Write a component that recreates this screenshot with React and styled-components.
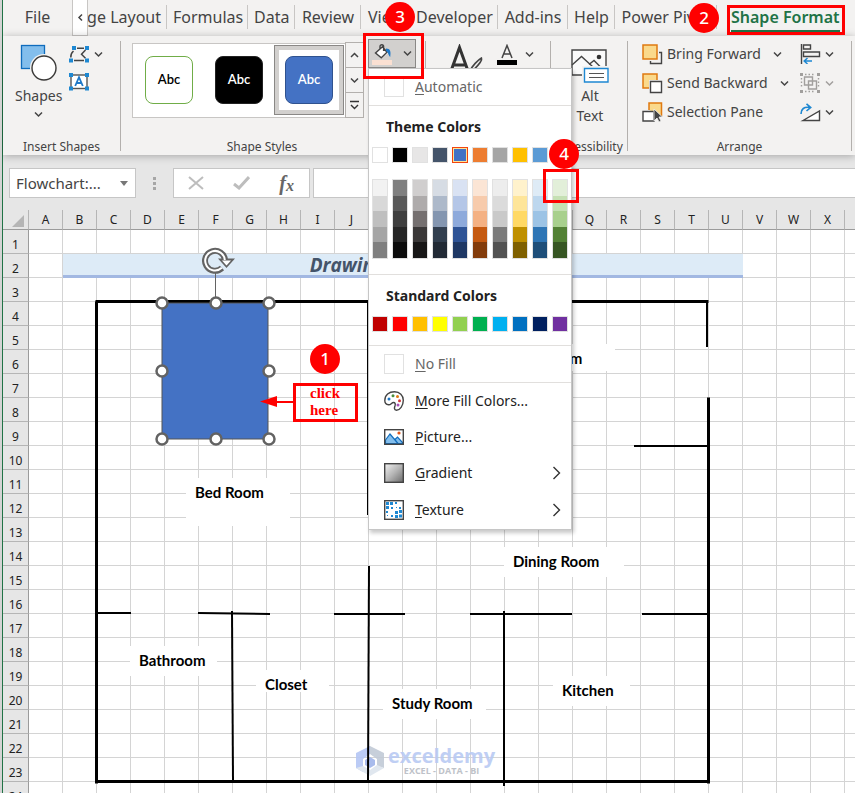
import React from "react";
import styled, { createGlobalStyle, css } from "styled-components";

const Global = createGlobalStyle`
  *, *::before, *::after { box-sizing: border-box; }
  html, body { margin: 0; padding: 0; }
  body { overflow: hidden; background: #ffffff; }
  button, input { font: inherit; color: inherit; margin: 0; padding: 0; border: 0; background: none; }
  a { color: inherit; text-decoration: none; }
  svg { display: block; flex: none; }
`;

const RED = "#ff0000";

const Window = styled.div`
  height: 100vh;
  display: flex;
  flex-direction: column;
  overflow: hidden;
  border-left: 2px solid #d4d4d4;
  box-shadow: inset 1px 0 0 #217346;
  padding-left: 1px;
  background: #e6e6e6;
  font-family: "Noto Sans", "Open Sans", sans-serif;
  color: #444444;
`;

/* ---------- callouts ---------- */
const Badge = styled.span`
  position: absolute;
  z-index: 30;
  left: ${(p) => p.$x}px;
  top: ${(p) => p.$y}px;
  width: 30px;
  height: 30px;
  border-radius: 50%;
  background: ${RED};
  color: #ffffff;
  text-align: center;
  font: 500 17px/30px "Noto Sans", sans-serif;
`;

const Frame = styled.span`
  position: absolute;
  z-index: 25;
  left: ${(p) => p.$x}px;
  top: ${(p) => p.$y}px;
  width: ${(p) => p.$w}px;
  height: ${(p) => p.$h}px;
  border: 3px solid ${RED};
  pointer-events: none;
`;

/* ---------- tabs ---------- */
const TabBar = styled.nav`
  flex: none;
  height: 36px;
  display: flex;
  align-items: flex-start;
  background: #f3f2f1;
  font-size: 16px;
  line-height: 24px;
  white-space: nowrap;
`;

const Tab = styled.a`
  flex: none;
  position: relative;
  margin-top: 5px;
  padding: 0 6px;
  width: ${(p) => p.$w}px;
  text-align: center;
  &::after {
    content: "";
    position: absolute;
    right: 0;
    top: 0;
    height: 24px;
    border-right: 1px solid ${(p) => (p.$plain ? "transparent" : "#c8c6c4")};
  }
`;

const ClippedTab = styled(Tab)`
  overflow: hidden;
  display: flex;
  justify-content: flex-end;
  padding: 0 6px 0 0;
`;

const ActiveTab = styled.a`
  position: relative;
  margin: 5px 0 0 14px;
  height: 27px;
  border-bottom: 2px solid #217346;
  color: #217346;
  font-weight: 600;
`;

const TabScroll = styled.button`
  flex: none;
  width: 16px;
  height: 36px;
  border: 1px solid #c8c6c4;
  border-top: 0;
  background: #ffffff;
  display: flex;
  align-items: center;
  justify-content: center;
`;

/* ---------- ribbon ---------- */
const Ribbon = styled.div`
  flex: none;
  position: relative;
  z-index: 5;
  height: 119px;
  padding-top: 5px;
  display: flex;
  background: #f3f2f1;
  box-shadow: 0 1px 8px rgba(0, 0, 0, 0.28);
`;

const Group = styled.section`
  flex: none;
  position: relative;
  width: ${(p) => p.$w}px;
  height: 110px;
  display: flex;
  flex-direction: column;
  border-right: 1px solid #b3b0ad;
`;

const GroupBody = styled.div`
  flex: none;
  height: 98px;
  display: flex;
  align-items: flex-start;
  padding: ${(p) => p.$pad || "0"};
  gap: ${(p) => p.$gap || 0}px;
`;

const GroupLabel = styled.h2`
  margin: 0;
  padding-right: ${(p) => p.$shift || 0}px;
  font-size: 12px;
  line-height: 16px;
  font-weight: 400;
  text-align: center;
  white-space: nowrap;
`;

const BigButton = styled.button`
  display: flex;
  flex-direction: column;
  align-items: center;
  font-size: 14px;
  line-height: 20px;
  gap: ${(p) => p.$gap || 0}px;
`;

const Stack = styled.div`
  display: flex;
  flex-direction: column;
  gap: ${(p) => p.$gap || 0}px;
`;

const IconButton = styled.button`
  display: flex;
  align-items: center;
  gap: ${(p) => p.$gap || 5}px;
  height: 20px;
`;

const Gallery = styled.div`
  display: flex;
  height: 75px;
  border: 1px solid #c8c6c4;
  padding-left: 1px;
  background: #ffffff;
`;

const StyleCell = styled.button`
  width: 70px;
  height: 70px;
  margin-top: 1px;
  display: flex;
  align-items: center;
  justify-content: center;
  ${(p) =>
    p.$selected &&
    css`
      border: 1px solid #8a8886;
      box-shadow: inset 0 0 0 4px #d2d0ce;
    `}
`;

const StyleChip = styled.span`
  width: 48px;
  height: 48px;
  border-radius: 8px;
  border: ${(p) => p.$border};
  background: ${(p) => p.$fill};
  color: ${(p) => p.$ink};
  font: 600 13px/44px Lato, sans-serif;
  text-align: center;
`;

const Spinner = styled.div`
  width: 19px;
  margin: -1px -1px -1px 1px;
  display: grid;
  grid-template-rows: repeat(3, 1fr);
  background: #f3f2f1;
`;

const SpinButton = styled.button`
  border: 1px solid #b3b0ad;
  margin-top: -1px;
  display: flex;
  align-items: center;
  justify-content: center;
`;

const FillHost = styled.div`
  position: relative;
  margin-top: -4px;
`;

const FillButton = styled.button`
  width: 48px;
  height: 29px;
  display: flex;
  align-items: center;
  justify-content: center;
  gap: 10px;
  background: #d2d0ce;
  border: 1px solid #8a8886;
`;

const ArrangeGrid = styled.div`
  flex: none;
  height: 98px;
  display: grid;
  grid-template-columns: 150px auto;
  grid-auto-rows: 29px;
  column-gap: 8px;
  padding-left: 14px;
  font-size: 14px;
  line-height: 20px;
`;

const ArrangeButton = styled.button`
  display: flex;
  align-items: center;
  gap: ${(p) => p.$gap || 4}px;
  height: 26px;
  white-space: nowrap;
`;

const ArrangeLabel = styled.span`
  margin-right: 8px;
`;

/* ---------- fill menu ---------- */
const Menu = styled.div`
  position: absolute;
  z-index: 20;
  left: 0;
  top: 29px;
  width: 204px;
  border: 1px solid #c6c6c6;
  background: #ffffff;
  box-shadow: 2px 3px 4px rgba(0, 0, 0, 0.22);
  display: flex;
  flex-direction: column;
  font-size: 14px;
  line-height: 20px;
  color: #222222;
`;

const MenuRow = styled.button`
  display: flex;
  align-items: center;
  gap: 11px;
  height: ${(p) => p.$h}px;
  padding: 0 10px 0 15px;
  color: ${(p) => (p.$muted ? "#666666" : "#222222")};
  border-bottom: ${(p) => (p.$rule ? "1px solid #e1dfdd" : "0")};
  text-align: left;
  white-space: nowrap;
`;

const MenuText = styled.span`
  flex: 1;
  &::first-letter { text-decoration: underline; text-underline-offset: 2px; }
`;

const EmptySwatch = styled.span`
  width: 20px;
  height: 20px;
  border: 1px solid #e1e1e1;
`;

const MenuSection = styled.div`
  padding: ${(p) => p.$pad};
  border-bottom: 1px solid #e1dfdd;
`;

const MenuTitle = styled.h3`
  margin: 0 0 10px 14px;
  font-size: 14px;
  line-height: 20px;
  font-weight: 700;
`;

const SwatchRow = styled.div`
  display: grid;
  grid-template-columns: repeat(10, 16px);
  column-gap: 4px;
`;

const Swatch = styled.button`
  width: 16px;
  height: 16px;
  background: ${(p) => p.$c};
  border: 1px solid #e1e1e1;
  ${(p) =>
    p.$selected &&
    css`
      border-color: #f2440f;
      box-shadow: inset 0 0 0 1px #ffe294;
    `}
`;

const TintRow = styled(SwatchRow)`
  margin-top: 16px;
`;

const TintColumn = styled.div`
  height: 80px;
  border: 1px solid #e1e1e1;
  display: grid;
  grid-template-rows: repeat(5, 1fr);
`;

const Tint = styled.button`
  background: ${(p) => p.$c};
`;

/* ---------- formula bar ---------- */
const FormulaBar = styled.div`
  flex: none;
  display: flex;
  align-items: stretch;
  height: 30px;
  margin: 13px 0 12px;
  padding-left: 6px;
`;

const Field = styled.div`
  display: flex;
  align-items: center;
  background: #ffffff;
  border: 1px solid #c6c6c6;
`;

const NameBox = styled(Field)`
  width: 127px;
  padding: 0 7px 0 6px;
`;

const NameInput = styled.input`
  flex: 1;
  min-width: 0;
  font-size: 15px;
  outline: 0;
`;

const Dots = styled.div`
  width: 37px;
  display: flex;
  align-items: center;
  justify-content: center;
`;

const FxBox = styled(Field)`
  width: 137px;
  margin-right: 3px;
  padding: 0 15px 0 14px;
  justify-content: space-between;
`;

const FxButton = styled.button`
  font: italic 700 20px/24px "Liberation Serif", serif;
  color: #666666;
  sub { font-size: 16px; line-height: 0; vertical-align: -1px; }
`;

const FormulaInput = styled.input`
  flex: 1;
  min-width: 0;
  background: #ffffff;
  border: 1px solid #c6c6c6;
  border-right: 0;
  padding: 0 8px;
`;

/* ---------- sheet ---------- */
const Sheet = styled.main`
  flex: 1;
  min-height: 0;
  position: relative;
  overflow: hidden;
  background: #ffffff;
`;

const Grid = styled.table`
  border-collapse: separate;
  border-spacing: 0;
  table-layout: fixed;
  width: 876px;
`;

const ColHead = styled.th`
  height: 20px;
  padding: 0;
  background: #e6e6e6;
  border-right: 1px solid #b5b5b5;
  border-bottom: 1px solid #9b9b9b;
  font-size: 12px;
  line-height: 16px;
  font-weight: 400;
  color: #222222;
`;

const Corner = styled(ColHead)`
  svg { margin: 2px 4px 0 auto; }
`;

const RowHead = styled.th`
  height: 24px;
  padding: 6px 0 0;
  background: #e6e6e6;
  border-right: 1px solid #9b9b9b;
  border-bottom: 1px solid #b5b5b5;
  font-size: 12px;
  line-height: 16px;
  font-weight: 400;
  color: #222222;
`;

const Cell = styled.td`
  padding: 0;
  border-right: 1px solid #d4d4d4;
  border-bottom: 1px solid #d4d4d4;
`;

const TitleCell = styled.td`
  padding: 0;
  background: #ddebf7;
  border-bottom: 3px solid #a2b8e2;
  color: #44546a;
  text-align: center;
  font: italic 700 19px/20px "Open Sans", "Noto Sans", sans-serif;
`;

/* Floating objects are placed in cell-area coordinates. */
const Canvas = styled.div`
  position: absolute;
  left: 26px;
  top: 20px;
`;

const Walls = styled.svg`
  position: absolute;
  left: 0;
  top: 0;
  overflow: visible;
`;

const RoomLabel = styled.span`
  position: absolute;
  left: ${(p) => p.$x}px;
  top: ${(p) => p.$y}px;
  width: ${(p) => p.$w}px;
  height: ${(p) => p.$h}px;
  padding: 4px 0 0 9px;
  background: #ffffff;
  color: #000000;
  font: 700 15px/20px Lato, sans-serif;
  white-space: nowrap;
`;

const ClickNote = styled.span`
  position: absolute;
  left: 264px;
  top: 153px;
  width: 65px;
  height: 39px;
  border: 3px solid ${RED};
  color: ${RED};
  font: 700 15px/17px "Liberation Serif", serif;
  display: flex;
  align-items: flex-end;
  padding: 0 12px 0 14px;
`;

const Brand = styled.div`
  position: absolute;
  left: 327px;
  top: 516px;
  display: flex;
  align-items: center;
  gap: 4px;
  opacity: 0.9;
`;

const BrandText = styled.div`
  display: flex;
  flex-direction: column;
  align-items: center;
  color: #b9caf3;
  font: 700 20px/20px "Open Sans", sans-serif;
  small { font-size: 9px; line-height: 10px; color: #b8bcc4; }
`;

/* ---------- icons ---------- */
const Chevron = ({ dir = "down", c = "#444", s = 8 }) => {
  const d = { down: "M1 2.5 4.5 6 8 2.5", up: "M1 6 4.5 2.5 8 6", left: "M6 1.5 3 4.5 6 7.5" }[dir];
  return (
    <svg width={s + 1} height={s + 1} viewBox="0 0 9 9" fill="none" stroke={c} strokeWidth="1.5">
      <path d={d} />
    </svg>
  );
};

const MoreStyles = () => (
  <svg width="9" height="10" viewBox="0 0 9 10" fill="none" stroke="#333" strokeWidth="1.4">
    <path d="M0 1.5h9M1 5 4.5 8.5 8 5" />
  </svg>
);

const ShapesIcon = () => (
  <svg width="38" height="38" viewBox="0 0 38 38">
    <rect x="1.5" y="1.5" width="23" height="23" fill="#83beec" stroke="#0f6cbd" strokeWidth="1.3" />
    <circle cx="24" cy="24" r="14" fill="#f3f2f1" />
    <circle cx="24" cy="24" r="12" fill="#fff" stroke="#3b3a39" strokeWidth="1.4" />
  </svg>
);

const EditPoints = () => (
  <svg width="20" height="17" viewBox="0 0 20 17" fill="none">
    <path d="M8 2.300h7M16.500 4 12.500 8.300l4 4M5 14.500h10M1.800 11.500C1.500 8.500 2.800 6.500 4.500 5" stroke="#444" strokeWidth="1.5" />
    <path d="M3 0h4v4H3zM16 0h4v4h-4zM0 12.500h4v4H0zM16 12.500h4v4h-4z" fill="#1e88d2" />
  </svg>
);

const TextBoxIcon = () => (
  <svg width="20" height="18" viewBox="0 0 20 18">
    <rect x="2" y="2" width="16" height="13.500" fill="#fff" stroke="#555" strokeWidth="1.4" />
    <path d="M6.200 13 10 4.200 13.800 13M7.600 10h4.800" stroke="#1e78c8" strokeWidth="1.8" fill="none" />
    <path d="M0 0h4v4H0zM16 0h4v4h-4zM0 13.500h4v4H0zM16 13.500h4v4h-4z" fill="#1e88d2" />
  </svg>
);

const BucketIcon = () => (
  <svg width="21" height="22" viewBox="0 0 21 22" fill="none">
    <path d="M4 9.500 10.500 4 16 10 9.500 15.500Z" fill="#fff" />
    <path d="M8 5.500V3.500a1.800 1.800 0 0 1 3.600 0V8M10.500 3.800 3.500 10l5.800 4.800L15 9.300Z" stroke="#444" strokeWidth="1.4" />
    <path d="M14 5.500c4.500 0 5 3 4.200 8.500-2-1.800-1.600-4.500-4.200-6Z" fill="#1e78c8" />
    <path d="M0 17h20v5H0z" fill="#fbe0d2" />
  </svg>
);

const TextEffectsIcon = () => (
  <svg width="36" height="30" viewBox="0 0 36 30" fill="none" stroke="#444" strokeWidth="1.6">
    <path d="M2 27 10.500 3.500 19 27M4.500 21h12" stroke="#333" strokeWidth="3" />
    <path d="M21 27c2-5 8-11 11.500-13 1.500 3-5 9-9 13" fill="#f3f2f1" />
  </svg>
);

const FontColorIcon = () => (
  <svg width="20" height="21" viewBox="0 0 20 21" fill="none">
    <path d="M5 14 10 1.500 15 14M6.700 10h6.600" stroke="#444" strokeWidth="1.5" />
    <path d="M0 16h20v5H0z" fill="#000" />
  </svg>
);

const AltTextIcon = () => (
  <svg width="38" height="34" viewBox="0 0 38 34" fill="none">
    <path d="M1 1h34v25H1z" fill="#fafafa" stroke="#444" strokeWidth="1.400" />
    <path d="M1 16 10.500 7.500 22 18M18 15.500l5-4 6 6" stroke="#444" strokeWidth="1.400" />
    <circle cx="28" cy="8" r="2.300" fill="#333" />
    <path d="M12.500 18.500h25v15h-25z" fill="#fff" stroke="#f3f2f1" strokeWidth="3" />
    <path d="M13.500 19.500h23.500v13.500H13.500z" fill="#fff" stroke="#1e88d2" strokeWidth="1.400" />
    <path d="M18 24.500h15M18 28.500h15" stroke="#555" strokeWidth="1.200" />
  </svg>
);

const ForwardIcon = () => (
  <svg width="21" height="21" viewBox="0 0 21 21" fill="none">
    <path d="M17 8.500h2.500v11H8.500V17" stroke="#444" strokeWidth="1.400" />
    <path d="M1 1h14v14H1z" fill="#fad98b" stroke="#e07a10" strokeWidth="1.500" />
  </svg>
);

const BackwardIcon = () => (
  <svg width="21" height="21" viewBox="0 0 21 21" fill="none">
    <path d="M1 1h14v14H1z" fill="#fad98b" stroke="#e07a10" strokeWidth="1.500" />
    <path d="M7 7h13v13H7z" fill="#f3f2f1" />
    <path d="M8.500 8.500h11v11h-11z" fill="#fff" stroke="#444" strokeWidth="1.400" />
  </svg>
);

const PaneIcon = () => (
  <svg width="21" height="21" viewBox="0 0 21 21" fill="none">
    <path d="M7 8V1h12.500v13" fill="#fad98b" stroke="#e07a10" strokeWidth="1.500" />
    <path d="M1 9.500h11V19H1z" fill="#fff" stroke="#444" strokeWidth="1.400" />
    <path d="M12 7v12l3-3 2 4 2-1-2-4h3.500z" fill="#444" stroke="#f3f2f1" strokeWidth="0.800" />
  </svg>
);

const AlignIcon = () => (
  <svg width="21" height="20" viewBox="0 0 21 20" fill="none">
    <path d="M1.500 0v20M3.500 1h7v4h-7zM3.500 8h16v4.500h-16z" stroke="#444" strokeWidth="1.400" />
    <path d="M12 17H4.500M7.500 14 4.200 17l3.300 3" stroke="#1e88d2" strokeWidth="1.500" />
  </svg>
);

const GroupIcon = () => (
  <svg width="21" height="20" viewBox="0 0 21 20" fill="none" stroke="#a19f9d" strokeWidth="1.400">
    <path d="M4.500 4h8v8h-8zM8.500 8h8v8h-8z" />
    <path d="M0 0h3v3H0zM17 0h3v3h-3zM0 17h3v3H0zM17 17h3v3h-3z" fill="#a19f9d" stroke="none" />
    <path d="M1.500 5v10M18.500 5v10M5 1.500h10M5 18.500h10" strokeDasharray="1.500 2" />
  </svg>
);

const RotateIcon = () => (
  <svg width="21" height="19" viewBox="0 0 21 19" fill="none">
    <path d="M3 17.500 19.500 8v9.500z" stroke="#444" strokeWidth="1.400" fill="#fff" />
    <path d="M1 11c0-5 3-7.500 9-6.500M6.500.8l4.200 3.600-4.200 3.600" stroke="#1e88d2" strokeWidth="1.600" />
  </svg>
);

const PaletteIcon = () => (
  <svg width="20" height="20" viewBox="0 0 20 20" fill="none">
    <path d="M.8 9.500C.8 4 5 .8 10.500.8 15.800.8 19.300 4.500 19.300 9.300c0 5.500-3.500 9.900-6.800 9.900-2.700 0-2.200-2.500-1.500-4.400.6-1.800.2-3.300-1.400-3.300-2.200 0-2.700 2.600-5 2.300C2 13.500.8 12 .8 9.500Z" stroke="#444" strokeWidth="1.400" fill="#fff" />
    <circle cx="5" cy="8" r="1.500" fill="#1e78c8" />
    <circle cx="9" cy="4.800" r="1.500" fill="#4a8f3c" />
    <circle cx="13.500" cy="5.500" r="1.500" fill="#e07a10" />
    <circle cx="15.500" cy="9.700" r="1.500" fill="#d13438" />
    <circle cx="14" cy="14" r="1.500" fill="#a54fb5" />
  </svg>
);

const PictureIcon = () => (
  <svg width="20" height="16" viewBox="0 0 20 16" fill="none">
    <path d="M1.500 11 6 5l8 9.500H1.500zM11 10.500l2.500-2.500 5 5.500v1H14z" fill="#83beec" stroke="#0f6cbd" strokeWidth="1.200" />
    <rect x="0.700" y="0.700" width="18.600" height="14.600" stroke="#444" strokeWidth="1.400" />
    <circle cx="15" cy="4" r="1.600" fill="#e0561b" />
  </svg>
);

const GradientIcon = () => (
  <svg width="20" height="20" viewBox="0 0 20 20">
    <defs>
      <linearGradient id="steel" x1="0" y1="0" x2="1" y2="1">
        <stop offset="0" stopColor="#f2f2f2" />
        <stop offset="0.500" stopColor="#b5b5b5" />
        <stop offset="1" stopColor="#6a6a6a" />
      </linearGradient>
    </defs>
    <rect x="0.700" y="0.700" width="18.600" height="18.600" fill="url(#steel)" stroke="#444" strokeWidth="1.400" />
  </svg>
);

const TextureIcon = () => (
  <svg width="20" height="20" viewBox="0 0 20 20">
    <rect x="0.700" y="0.700" width="18.600" height="18.600" fill="#fff" stroke="#444" strokeWidth="1.400" />
    <path
      d="M2 2h3v3H2zM6 2h3v3H6zM11 2h2v2h-2zM2 6h3v3H2zM7 7h2v2H7zM2 11h2v2H2zM15 7h2v2h-2zM11 11h3v3h-3zM15 10h3v3h-3zM7 15h2v2H7zM11 15h3v3h-3zM15 14.500h3v3h-3zM12 7h1v1h-1zM3 15h1v1H3z"
      fill="#1e88d2"
    />
  </svg>
);

const SubmenuArrow = () => (
  <svg width="9" height="14" viewBox="0 0 9 14" fill="none" stroke="#333" strokeWidth="1.400">
    <path d="M1.500 1 7.500 7l-6 6" />
  </svg>
);

const RotateHandle = ({ x, y }) => (
  <g transform={`translate(${x} ${y})`} fill="none">
    <path d="M7 7A10 10 0 1 1 10-1" stroke="#636363" strokeWidth="6" />
    <path d="M3-2.500h17L11.500 7z" fill="#636363" />
    <path d="M6.800 6.800A9.800 9.800 0 1 1 9.800-1" stroke="#fff" strokeWidth="2" />
    <path d="M7-.5h9L11.500 4.500z" fill="#fff" />
  </g>
);

/* ---------- data ---------- */
const THEME = ["#ffffff", "#000000", "#e7e6e6", "#44546a", "#4472c4", "#ed7d31", "#a5a5a5", "#ffc000", "#5b9bd5", "#70ad47"];
const TINTS = [
  ["#f2f2f2", "#d8d8d8", "#bfbfbf", "#a5a5a5", "#7f7f7f"],
  ["#7f7f7f", "#595959", "#3f3f3f", "#262626", "#0c0c0c"],
  ["#d0cece", "#aeabab", "#757070", "#3a3838", "#171616"],
  ["#d6dce4", "#adb9ca", "#8496b0", "#323f4f", "#222a35"],
  ["#d9e2f3", "#b4c6e7", "#8eaadb", "#2f5496", "#1f3864"],
  ["#fbe5d5", "#f7cbac", "#f4b183", "#c55a11", "#833c0b"],
  ["#ededed", "#dbdbdb", "#c9c9c9", "#7b7b7b", "#525252"],
  ["#fff2cc", "#fee599", "#ffd965", "#bf9000", "#7f6000"],
  ["#deebf6", "#bdd7ee", "#9cc3e5", "#2e75b5", "#1e4e79"],
  ["#e2efd9", "#c5e0b3", "#a8d08d", "#538135", "#375623"],
];
const STANDARD = ["#c00000", "#ff0000", "#ffc000", "#ffff00", "#92d050", "#00b050", "#00b0f0", "#0070c0", "#002060", "#7030a0"];
const COLUMNS = "ABCDEFGHIJKLMNOPQRSTUVWXY".split("");
const ROWS = Array.from({ length: 24 }, (_, i) => i + 1);

/* x1, y1, x2, y2, thickness */
const WALLS = [
  [67, 71, 67, 553, 3],
  [66, 71, 679, 71, 3],
  [678, 71, 678, 117, 2],
  [679, 167, 679, 553, 3],
  [66, 551, 680, 551, 3],
  [605, 216, 679, 216, 2],
  [68, 383, 102, 383, 2],
  [169, 383, 241, 384, 2],
  [305, 384, 376, 384, 2],
  [441, 384, 543, 384, 2],
  [613, 384, 679, 384, 2],
  [203, 381, 204, 551, 2],
  [339, 71, 339, 285, 2],
  [340, 336, 339, 551, 2],
  [475, 381, 475, 556, 2],
];
const ROOMS = [
  { t: "Living Room", x: 462, y: 114, w: 124, h: 27 },
  { t: "Bed Room", x: 157, y: 248, w: 104, h: 48 },
  { t: "Dining Room", x: 475, y: 317, w: 120, h: 30 },
  { t: "Bathroom", x: 101, y: 416, w: 87, h: 30 },
  { t: "Closet", x: 227, y: 440, w: 73, h: 22 },
  { t: "Study Room", x: 354, y: 459, w: 103, h: 30 },
  { t: "Kitchen", x: 524, y: 446, w: 77, h: 30 },
];
const HANDLES = [
  [133, 73], [187, 73], [240, 73], [133, 141], [240, 141], [133, 209], [187, 209], [240, 209],
];

function FillMenu() {
  return (
    <Menu role="menu" aria-label="Shape Fill">
      <MenuRow $h={37} $muted $rule>
        <EmptySwatch />
        <MenuText>Automatic</MenuText>
      </MenuRow>
      <MenuSection $pad="11px 3px 15px">
        <MenuTitle>Theme Colors</MenuTitle>
        <SwatchRow>
          {THEME.map((c) => (
            <Swatch key={c} $c={c} $selected={c === "#4472c4"} aria-label={c} />
          ))}
        </SwatchRow>
        <TintRow>
          {TINTS.map((col, i) => (
            <TintColumn key={i}>
              {col.map((c) => (
                <Tint key={c} $c={c} aria-label={c} />
              ))}
            </TintColumn>
          ))}
        </TintRow>
      </MenuSection>
      <MenuSection $pad="11px 3px 13px">
        <MenuTitle>Standard Colors</MenuTitle>
        <SwatchRow>
          {STANDARD.map((c) => (
            <Swatch key={c} $c={c} aria-label={c} />
          ))}
        </SwatchRow>
      </MenuSection>
      <MenuRow $h={37} $muted $rule>
        <EmptySwatch />
        <MenuText>No Fill</MenuText>
      </MenuRow>
      <MenuRow $h={36}><PaletteIcon /><MenuText>More Fill Colors...</MenuText></MenuRow>
      <MenuRow $h={36}><PictureIcon /><MenuText>Picture...</MenuText></MenuRow>
      <MenuRow $h={36}><GradientIcon /><MenuText>Gradient</MenuText><SubmenuArrow /></MenuRow>
      <MenuRow $h={38}><TextureIcon /><MenuText>Texture</MenuText><SubmenuArrow /></MenuRow>
      <Badge $x={180} $y={70}>4</Badge>
      <Frame $x={174} $y={100} $w={36} $h={34} />
    </Menu>
  );
}

function RibbonGroups() {
  return (
    <Ribbon>
      <Group $w={118}>
        <GroupBody $pad="3px 0 0 12px" $gap={7}>
          <BigButton $gap={4}>
            <ShapesIcon />
            Shapes
            <Chevron />
          </BigButton>
          <Stack $gap={8}>
            <IconButton aria-label="Edit shape"><EditPoints /><Chevron /></IconButton>
            <IconButton aria-label="Text box"><TextBoxIcon /></IconButton>
          </Stack>
        </GroupBody>
        <GroupLabel>Insert Shapes</GroupLabel>
      </Group>
      <Group $w={305}>
        <GroupBody $pad="2px 0 0 11px" $gap={4}>
          <Gallery>
            <StyleCell><StyleChip $border="1px solid #70ad47" $fill="#fff" $ink="#000">Abc</StyleChip></StyleCell>
            <StyleCell><StyleChip $border="1px solid #222" $fill="#000" $ink="#fff">Abc</StyleChip></StyleCell>
            <StyleCell $selected><StyleChip $border="1px solid #2f528f" $fill="#4472c4" $ink="#fff">Abc</StyleChip></StyleCell>
            <Spinner>
              <SpinButton aria-label="Previous styles"><Chevron dir="up" /></SpinButton>
              <SpinButton aria-label="Next styles"><Chevron /></SpinButton>
              <SpinButton aria-label="More styles"><MoreStyles /></SpinButton>
            </Spinner>
          </Gallery>
          <FillHost>
            <FillButton aria-label="Shape fill"><BucketIcon /><Chevron /></FillButton>
            <FillMenu />
            <Frame $x={-5} $y={-6} $w={61} $h={46} />
            <Badge $x={17} $y={-37}>3</Badge>
          </FillHost>
        </GroupBody>
        <GroupLabel $shift={22}>Shape Styles</GroupLabel>
      </Group>
      <Group $w={125}>
        <GroupBody $pad="3px 0 0 23px" $gap={12}>
          <BigButton aria-label="Text effects"><TextEffectsIcon /></BigButton>
          <IconButton $gap={8} aria-label="Text fill"><FontColorIcon /><Chevron /></IconButton>
        </GroupBody>
      </Group>
      <Group $w={77}>
        <GroupBody $pad="8px 0 0 20px">
          <BigButton $gap={3}><AltTextIcon /><span>Alt<br />Text</span></BigButton>
        </GroupBody>
        <GroupLabel>Accessibility</GroupLabel>
      </Group>
      <Group $w={224}>
        <ArrangeGrid>
          <ArrangeButton><ForwardIcon /><ArrangeLabel>Bring Forward</ArrangeLabel><Chevron /></ArrangeButton>
          <ArrangeButton aria-label="Align"><AlignIcon /><Chevron /></ArrangeButton>
          <ArrangeButton><BackwardIcon /><ArrangeLabel>Send Backward</ArrangeLabel><Chevron /></ArrangeButton>
          <ArrangeButton aria-label="Group"><GroupIcon /><Chevron c="#a19f9d" /></ArrangeButton>
          <ArrangeButton><PaneIcon /><ArrangeLabel>Selection Pane</ArrangeLabel></ArrangeButton>
          <ArrangeButton aria-label="Rotate"><RotateIcon /><Chevron /></ArrangeButton>
        </ArrangeGrid>
        <GroupLabel>Arrange</GroupLabel>
      </Group>
    </Ribbon>
  );
}

function SheetGrid() {
  return (
    <Grid>
      <colgroup>
        <col width="26" />
        {COLUMNS.map((c) => <col key={c} width="34" />)}
      </colgroup>
      <thead>
        <tr>
          <Corner aria-label="Select all">
            <svg width="12" height="12" viewBox="0 0 12 12"><path d="M12 0v12H0z" fill="#b5b5b5" /></svg>
          </Corner>
          {COLUMNS.map((c) => <ColHead key={c} scope="col">{c}</ColHead>)}
        </tr>
      </thead>
      <tbody>
        {ROWS.map((r) => (
          <tr key={r}>
            <RowHead scope="row">{r}</RowHead>
            {r === 2 ? (
              <>
                <Cell />
                <TitleCell colSpan={20}>Drawing a Floor Plan</TitleCell>
                {COLUMNS.slice(21).map((c) => <Cell key={c} />)}
              </>
            ) : (
              COLUMNS.map((c) => <Cell key={c} />)
            )}
          </tr>
        ))}
      </tbody>
    </Grid>
  );
}

function FloorPlan() {
  return (
    <Canvas>
      {ROOMS.map((r) => (
        <RoomLabel key={r.t} $x={r.x} $y={r.y} $w={r.w} $h={r.h}>{r.t}</RoomLabel>
      ))}
      <Brand>
        <svg width="28" height="30" viewBox="0 0 28 30">
          <path d="M14 0 0 7v15l7 4V13l7-5z" fill="#b4c6f5" />
          <path d="M14 0v8l7 5v7l7 2V7z" fill="#c2cad6" />
          <path d="M0 22l14 8 14-8-7-3-7 5-7-4z" fill="#dde5ee" />
          <path d="M14 11l5 3v5l-5 3-5-3v-5z" fill="#9fb4ea" />
        </svg>
        <BrandText>exceldemy<small>EXCEL - DATA - BI</small></BrandText>
      </Brand>
      <Walls width="700" height="560">
        {WALLS.map(([x1, y1, x2, y2, t], i) => (
          <line key={i} x1={x1 + (t === 3 ? 0.5 : 0)} y1={y1 + (t === 3 ? 0.5 : 0)} x2={x2 + (t === 3 ? 0.5 : 0)} y2={y2 + (t === 3 ? 0.5 : 0)} stroke="#000" strokeWidth={t} />
        ))}
        <rect x="133" y="73" width="106" height="136" fill="#4472c4" stroke="#555" />
        <path d="M186.500 40v28" stroke="#636363" />
        {HANDLES.map(([x, y]) => (
          <circle key={`${x}-${y}`} cx={x} cy={y} r="5.500" fill="#fff" stroke="#636363" strokeWidth="2.500" />
        ))}
        <RotateHandle x={186} y={31} />
        <path d="M264 172h-16" stroke={RED} strokeWidth="2" />
        <path d="M231 171.500l17-5.500v11z" fill={RED} />
      </Walls>
      <ClickNote>click here</ClickNote>
      <Badge $x={281} $y={114}>1</Badge>
    </Canvas>
  );
}

export default function App() {
  return (
    <Window>
      <Global />
      <TabBar aria-label="Ribbon tabs">
        <Tab href="#file" $w={69} $plain>File</Tab>
        <TabScroll aria-label="Scroll tabs left"><Chevron dir="left" /></TabScroll>
        <ClippedTab href="#layout" $w={79}>Page Layout</ClippedTab>
        <Tab href="#formulas" $w={81}>Formulas</Tab>
        <Tab href="#data" $w={47}>Data</Tab>
        <Tab href="#review" $w={66}>Review</Tab>
        <Tab href="#view" $w={49} $plain>View</Tab>
        <Tab href="#developer" $w={88}>Developer</Tab>
        <Tab href="#addins" $w={70}>Add-ins</Tab>
        <Tab href="#help" $w={47}>Help</Tab>
        <Tab href="#pivot" $w={102}>Power Pivot<Badge $x={74} $y={-2}>2</Badge></Tab>
        <ActiveTab href="#format" aria-current="page">Shape Format<Frame $x={-4} $y={0} $w={118} $h={30} /></ActiveTab>
      </TabBar>
      <RibbonGroups />
      <FormulaBar>
        <NameBox>
          <NameInput aria-label="Name box" defaultValue="Flowchart:..." />
          <svg width="8" height="5" viewBox="0 0 8 5"><path d="M0 0h8L4 5z" fill="#777" /></svg>
        </NameBox>
        <Dots>
          <svg width="3" height="13" viewBox="0 0 3 13" fill="#a6a6a6"><path d="M0 0h3v3H0zM0 5h3v3H0zM0 10h3v3H0z" /></svg>
        </Dots>
        <FxBox>
          <button aria-label="Cancel">
            <svg width="16" height="14" viewBox="0 0 16 14" fill="none" stroke="#bdbdbd" strokeWidth="2"><path d="M1 1l14 12M15 1 1 13" /></svg>
          </button>
          <button aria-label="Enter">
            <svg width="17" height="14" viewBox="0 0 17 14" fill="none" stroke="#bdbdbd" strokeWidth="3"><path d="M1 8l5 4L16 1" /></svg>
          </button>
          <FxButton aria-label="Insert function">f<sub>x</sub></FxButton>
        </FxBox>
        <FormulaInput aria-label="Formula" />
      </FormulaBar>
      <Sheet>
        <SheetGrid />
        <FloorPlan />
      </Sheet>
    </Window>
  );
}
